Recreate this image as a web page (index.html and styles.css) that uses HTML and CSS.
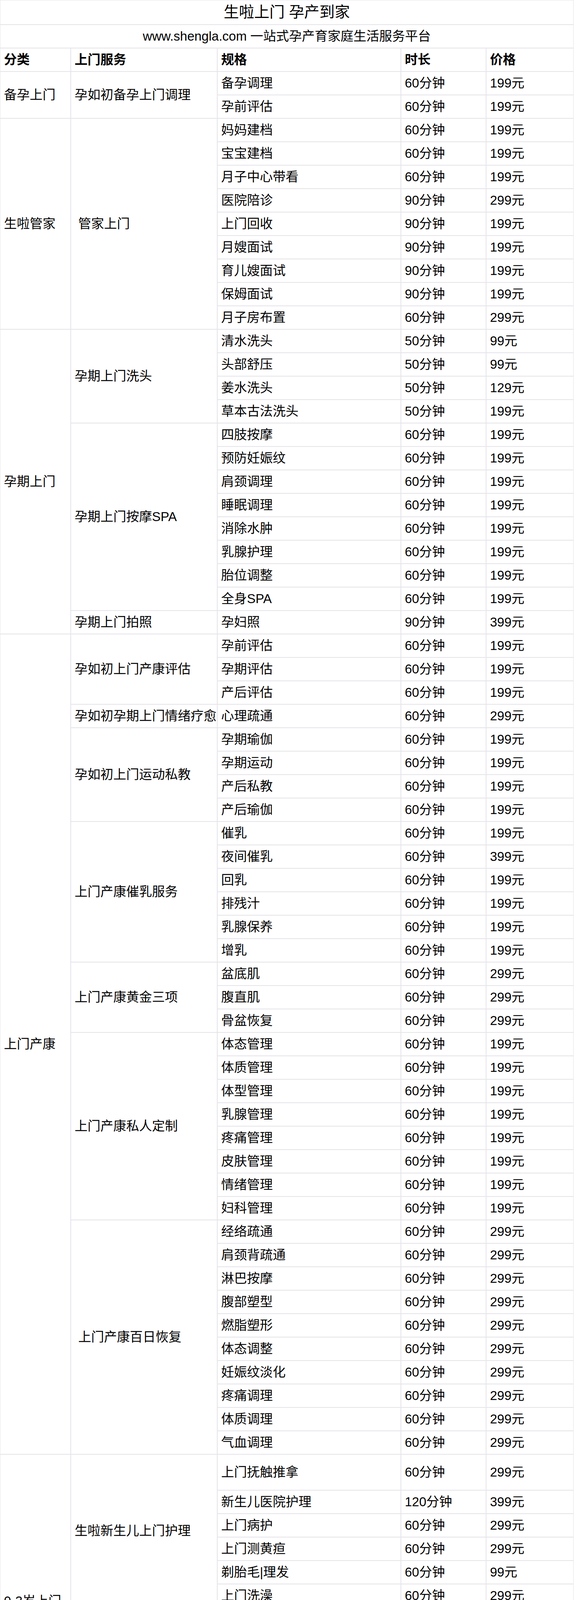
FILE: index.html
```html
<!DOCTYPE html>
<html lang="zh-CN">
<head>
<meta charset="utf-8">
<title>生啦上门 孕产到家</title>
<link rel="stylesheet" href="styles.css">
</head>
<body>
<table class="price-table">
<colgroup>
<col class="c1"><col class="c2"><col class="c3"><col class="c4"><col class="c5">
</colgroup>
<tbody>
<tr class="title-row"><td colspan="5" class="title">生啦上门 孕产到家</td></tr>
<tr><td colspan="5" class="subtitle">www.shengla.com 一站式孕产育家庭生活服务平台</td></tr>
<tr class="head"><td>分类</td><td>上门服务</td><td>规格</td><td>时长</td><td>价格</td></tr>

<tr><td rowspan="2">备孕上门</td><td rowspan="2">孕如初备孕上门调理</td><td>备孕调理</td><td>60分钟</td><td>199元</td></tr>
<tr><td>孕前评估</td><td>60分钟</td><td>199元</td></tr>

<tr><td rowspan="9">生啦管家</td><td rowspan="9">&nbsp;管家上门</td><td>妈妈建档</td><td>60分钟</td><td>199元</td></tr>
<tr><td>宝宝建档</td><td>60分钟</td><td>199元</td></tr>
<tr><td>月子中心带看</td><td>60分钟</td><td>199元</td></tr>
<tr><td>医院陪诊</td><td>90分钟</td><td>299元</td></tr>
<tr><td>上门回收</td><td>90分钟</td><td>199元</td></tr>
<tr><td>月嫂面试</td><td>90分钟</td><td>199元</td></tr>
<tr><td>育儿嫂面试</td><td>90分钟</td><td>199元</td></tr>
<tr><td>保姆面试</td><td>90分钟</td><td>199元</td></tr>
<tr><td>月子房布置</td><td>60分钟</td><td>299元</td></tr>

<tr><td rowspan="13">孕期上门</td><td rowspan="4">孕期上门洗头</td><td>清水洗头</td><td>50分钟</td><td>99元</td></tr>
<tr><td>头部舒压</td><td>50分钟</td><td>99元</td></tr>
<tr><td>姜水洗头</td><td>50分钟</td><td>129元</td></tr>
<tr><td>草本古法洗头</td><td>50分钟</td><td>199元</td></tr>
<tr><td rowspan="8">孕期上门按摩SPA</td><td>四肢按摩</td><td>60分钟</td><td>199元</td></tr>
<tr><td>预防妊娠纹</td><td>60分钟</td><td>199元</td></tr>
<tr><td>肩颈调理</td><td>60分钟</td><td>199元</td></tr>
<tr><td>睡眠调理</td><td>60分钟</td><td>199元</td></tr>
<tr><td>消除水肿</td><td>60分钟</td><td>199元</td></tr>
<tr><td>乳腺护理</td><td>60分钟</td><td>199元</td></tr>
<tr><td>胎位调整</td><td>60分钟</td><td>199元</td></tr>
<tr><td>全身SPA</td><td>60分钟</td><td>199元</td></tr>
<tr><td>孕期上门拍照</td><td>孕妇照</td><td>90分钟</td><td>399元</td></tr>

<tr><td rowspan="35">上门产康</td><td rowspan="3">孕如初上门产康评估</td><td>孕前评估</td><td>60分钟</td><td>199元</td></tr>
<tr><td>孕期评估</td><td>60分钟</td><td>199元</td></tr>
<tr><td>产后评估</td><td>60分钟</td><td>199元</td></tr>
<tr><td>孕如初孕期上门情绪疗愈</td><td>心理疏通</td><td>60分钟</td><td>299元</td></tr>
<tr><td rowspan="4">孕如初上门运动私教</td><td>孕期瑜伽</td><td>60分钟</td><td>199元</td></tr>
<tr><td>孕期运动</td><td>60分钟</td><td>199元</td></tr>
<tr><td>产后私教</td><td>60分钟</td><td>199元</td></tr>
<tr><td>产后瑜伽</td><td>60分钟</td><td>199元</td></tr>
<tr><td rowspan="6">上门产康催乳服务</td><td>催乳</td><td>60分钟</td><td>199元</td></tr>
<tr><td>夜间催乳</td><td>60分钟</td><td>399元</td></tr>
<tr><td>回乳</td><td>60分钟</td><td>199元</td></tr>
<tr><td>排残汁</td><td>60分钟</td><td>199元</td></tr>
<tr><td>乳腺保养</td><td>60分钟</td><td>199元</td></tr>
<tr><td>增乳</td><td>60分钟</td><td>199元</td></tr>
<tr><td rowspan="3">上门产康黄金三项</td><td>盆底肌</td><td>60分钟</td><td>299元</td></tr>
<tr><td>腹直肌</td><td>60分钟</td><td>299元</td></tr>
<tr><td>骨盆恢复</td><td>60分钟</td><td>299元</td></tr>
<tr><td rowspan="8">上门产康私人定制</td><td>体态管理</td><td>60分钟</td><td>199元</td></tr>
<tr><td>体质管理</td><td>60分钟</td><td>199元</td></tr>
<tr><td>体型管理</td><td>60分钟</td><td>199元</td></tr>
<tr><td>乳腺管理</td><td>60分钟</td><td>199元</td></tr>
<tr><td>疼痛管理</td><td>60分钟</td><td>199元</td></tr>
<tr><td>皮肤管理</td><td>60分钟</td><td>199元</td></tr>
<tr><td>情绪管理</td><td>60分钟</td><td>199元</td></tr>
<tr><td>妇科管理</td><td>60分钟</td><td>199元</td></tr>
<tr><td rowspan="10">&nbsp;上门产康百日恢复</td><td>经络疏通</td><td>60分钟</td><td>299元</td></tr>
<tr><td>肩颈背疏通</td><td>60分钟</td><td>299元</td></tr>
<tr><td>淋巴按摩</td><td>60分钟</td><td>299元</td></tr>
<tr><td>腹部塑型</td><td>60分钟</td><td>299元</td></tr>
<tr><td>燃脂塑形</td><td>60分钟</td><td>299元</td></tr>
<tr><td>体态调整</td><td>60分钟</td><td>299元</td></tr>
<tr><td>妊娠纹淡化</td><td>60分钟</td><td>299元</td></tr>
<tr><td>疼痛调理</td><td>60分钟</td><td>299元</td></tr>
<tr><td>体质调理</td><td>60分钟</td><td>299元</td></tr>
<tr><td>气血调理</td><td>60分钟</td><td>299元</td></tr>

<tr class="tall"><td rowspan="12">0-3岁上门</td><td rowspan="6">生啦新生儿上门护理</td><td>上门抚触推拿</td><td>60分钟</td><td>299元</td></tr>
<tr><td>新生儿医院护理</td><td>120分钟</td><td>399元</td></tr>
<tr><td>上门病护</td><td>60分钟</td><td>299元</td></tr>
<tr><td>上门测黄疸</td><td>60分钟</td><td>299元</td></tr>
<tr><td>剃胎毛|理发</td><td>60分钟</td><td>99元</td></tr>
<tr><td>上门洗澡</td><td>60分钟</td><td>299元</td></tr>
<tr><td rowspan="2">生啦上门月子教练</td><td>上门母乳指导</td><td>60分钟</td><td>199元</td></tr>
<tr><td>上门产康指导</td><td>60分钟</td><td>199元</td></tr>
<tr><td rowspan="3">生啦上门新生儿拍照</td><td>新生儿拍照</td><td>90分钟</td><td>399元</td></tr>
<tr><td>满月拍照</td><td>90分钟</td><td>399元</td></tr>
<tr><td>百天拍照</td><td>90分钟</td><td>399元</td></tr>
<tr><td>生啦上门早教服务</td><td>上门早教</td><td>90分钟</td><td>399元</td></tr>

<tr><td rowspan="23">上门理疗</td><td rowspan="3">功到推拿 背部调理</td><td>背部调理</td><td>60分钟</td><td>399元</td></tr>
<tr><td>背部调理+温灸</td><td>60分钟</td><td>399元</td></tr>
<tr><td>背部精油spa</td><td>60分钟</td><td>399元</td></tr>
<tr><td rowspan="3">功到推拿 腹部调理</td><td>腹部调理+温灸</td><td>60分钟</td><td>399元</td></tr>
<tr><td>腹部调理</td><td>40分钟</td><td>399元</td></tr>
<tr><td>腹部减脂+温灸</td><td>60分钟</td><td>399元</td></tr>
<tr><td rowspan="4">功到推拿 肩颈调理</td><td>富贵包</td><td>60分钟</td><td>399元</td></tr>
<tr><td>肩颈背SPA</td><td>&nbsp;60分钟</td><td>399元</td></tr>
<tr><td>肩颈舒压调理</td><td>60分钟</td><td>399元</td></tr>
<tr><td>肩腰臀SPA</td><td>80分钟</td><td>399元</td></tr>
<tr><td>功到推拿 暖宫归元SPA</td><td>调理气血 改善痛经</td><td>60分钟</td><td>399元</td></tr>
<tr><td rowspan="2">功到推拿 深度调理</td><td>全身深度解压SPA</td><td>120分钟</td><td>399元</td></tr>
<tr><td>深度肩颈推拿 (含淋巴))</td><td>60分钟</td><td>399元</td></tr>
<tr><td rowspan="2">功到推拿 腰部保养</td><td>元气·舒养腰部调理+温灸</td><td>&nbsp;60分钟</td><td>399元</td></tr>
<tr><td>腰轻松</td><td>&nbsp;60分钟</td><td>399元</td></tr>
<tr><td rowspan="4">功到推拿 四肢放松</td><td>手臂调理</td><td>60分钟</td><td>399元</td></tr>
<tr><td>头部调理</td><td>60分钟</td><td>399元</td></tr>
<tr><td>腿部调理+温灸</td><td>60分钟</td><td>399元</td></tr>
<tr><td>腿部调理放松 缓解酸痛</td><td>45分钟</td><td>399元</td></tr>
<tr><td rowspan="2">功到推拿 臀部保养</td><td>臀部紧致提升+温灸</td><td>&nbsp;60分钟</td><td>399元</td></tr>
<tr><td>臀部舒缓解压</td><td>40分钟</td><td>399元</td></tr>
<tr><td rowspan="2">功到推拿 胸部保养</td><td>美胸养腹SPA精油推拿</td><td>70分钟</td><td>399元</td></tr>
<tr><td>乳腺疏通</td><td>60分钟</td><td>399元</td></tr>
</tbody>
</table>
</body>
</html>
```

FILE: styles.css
```css
html, body {
  margin: 0;
  padding: 0;
  background: #ffffff;
}

body {
  font-family: "Liberation Sans", "Noto Sans CJK SC", sans-serif;
  color: #000000;
}

.price-table {
  border-collapse: separate;
  border-spacing: 0;
  table-layout: fixed;
  width: 1468px;
  font-size: 33px;
}

.c1 { width: 181px; }
.c2 { width: 375px; }
.c3 { width: 470px; }
.c4 { width: 218px; }
.c5 { width: 224px; }

.price-table tr {
  height: 60px;
}

.price-table td {
  border: 1px solid #e4e4ea;
  padding: 0 0 0 9px;
  white-space: nowrap;
  vertical-align: middle;
  line-height: 1.2;
  overflow: hidden;
}

.price-table tr.title-row {
  height: 63px;
}

.price-table tr.tall {
  height: 92px;
}

.price-table td.title {
  text-align: center;
  font-size: 39px;
  padding: 0;
}

.price-table td.subtitle {
  text-align: center;
  padding: 0;
}

.price-table tr.head td {
  font-weight: bold;
}
```
